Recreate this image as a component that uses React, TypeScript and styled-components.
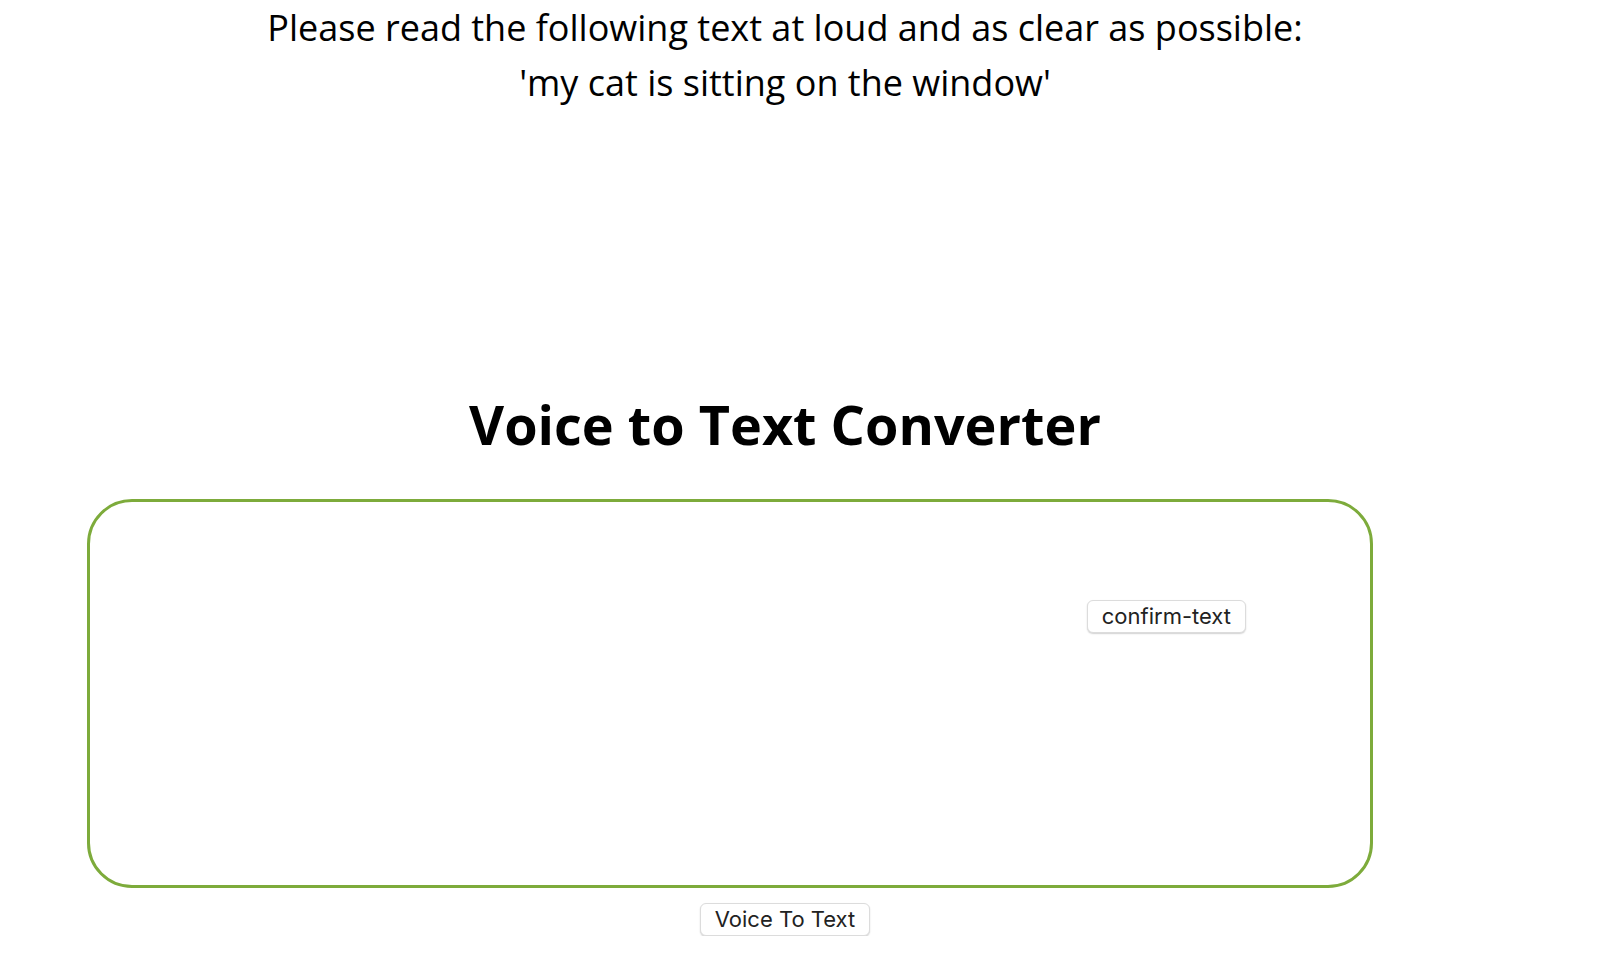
import React from "react";
import styled, { createGlobalStyle } from "styled-components";

const Global = createGlobalStyle`
  html, body { margin: 0; padding: 0; background: #fff; }
  body { font-family: "Open Sans", sans-serif; color: #000; }
`;

const Page = styled.div`
  width: 1570px;
  display: flex;
  flex-direction: column;
  align-items: center;
`;

const Prompt = styled.p`
  margin: 0;
  font-family: "Open Sans", sans-serif;
  font-size: 36px;
  line-height: 55px;
  text-align: center;
`;

const Title = styled.h1`
  margin: 276px 0 0;
  font-family: "Open Sans", sans-serif;
  font-weight: 700;
  font-size: 54px;
  line-height: 76px;
  text-align: center;
`;

const Box = styled.div`
  box-sizing: border-box;
  align-self: flex-start;
  margin: 37px 0 0 87px;
  width: 1286px;
  height: 389px;
  border: 3px solid #7dab3b;
  border-radius: 45px;
  display: flex;
  justify-content: flex-end;
  align-items: flex-start;
  padding: 98px 124px 0 0;
`;

const Button = styled.button`
  box-sizing: border-box;
  height: 33px;
  padding: 0 14px;
  background: #fff;
  border: 1px solid #dcdcdc;
  border-radius: 6px;
  box-shadow: 0 1px 1.5px rgba(0, 0, 0, 0.18);
  font-family: Inter, "Liberation Sans", sans-serif;
  font-size: 22px;
  line-height: 31px;
  color: #222;
  cursor: pointer;
`;

const Footer = styled.div`
  margin-top: 15px;
  display: flex;
  justify-content: center;
`;

export default function App() {
  return (
    <>
      <Global />
      <Page>
        <Prompt>
          Please read the following text at loud and as clear as possible:
          <br />
          'my cat is sitting on the window'
        </Prompt>
        <Title>Voice to Text Converter</Title>
        <Box>
          <Button>confirm-text</Button>
        </Box>
        <Footer>
          <Button>Voice To Text</Button>
        </Footer>
      </Page>
    </>
  );
}
